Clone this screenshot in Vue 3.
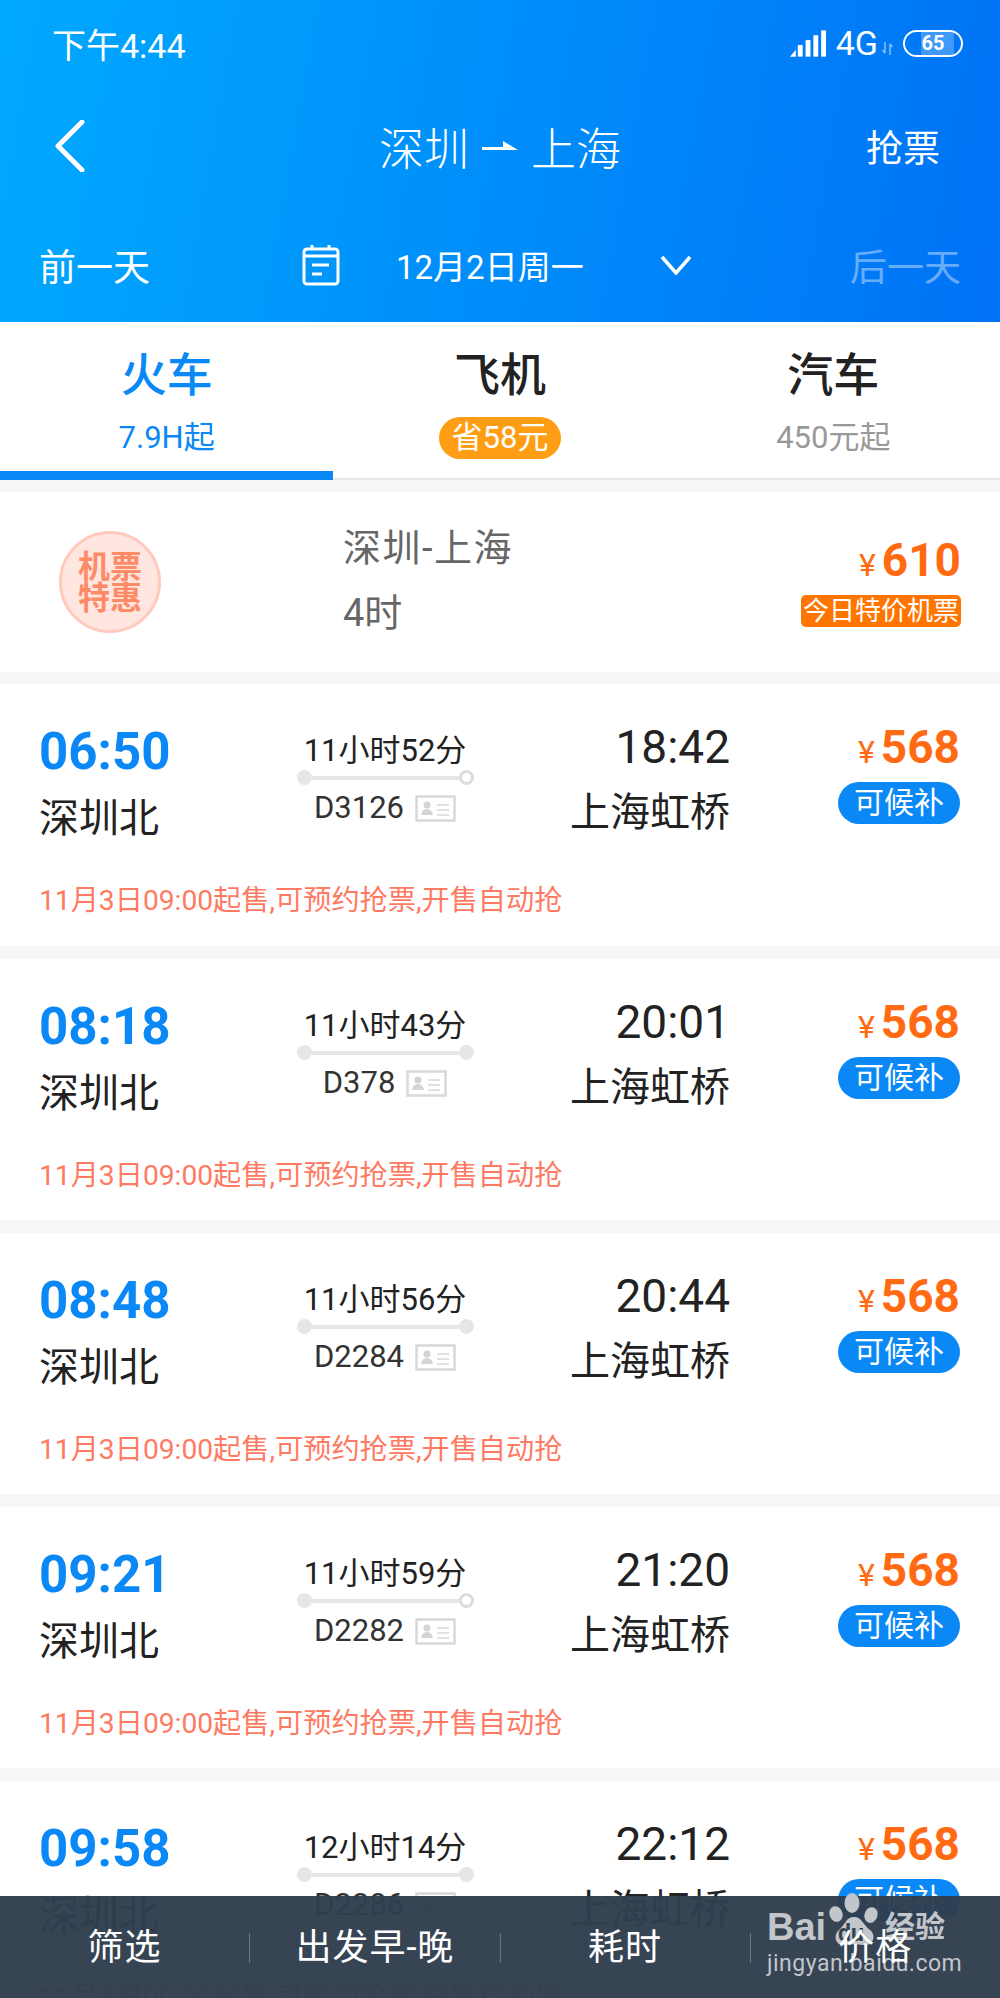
<template>
  <div class="page">
    <header class="head">
      <div class="status">
        <span class="clock">下午4:44</span>
        <div class="status-right">
          <svg class="signal" width="37" height="27" viewBox="0 0 38 27">
            <path d="M0 27 L6 20 V27 Z" fill="#fff" />
            <rect x="8" y="15" width="5" height="12" fill="#fff" />
            <rect x="16" y="10" width="5" height="17" fill="#fff" />
            <rect x="24" y="5" width="5" height="22" fill="#fff" />
            <rect x="32" y="0" width="5" height="27" fill="#fff" />
          </svg>
          <span class="net">4G</span>
          <svg class="updown" width="11" height="13" viewBox="0 0 11 13">
            <path d="M3 0 V11 M0.5 8 L3 11 M8 13 V2 M10.5 5 L8 2" stroke="#fff" stroke-opacity="0.55" stroke-width="1.5" fill="none" />
          </svg>
          <div class="battery">
            <i class="battery-fill"></i>
            <span>65</span>
          </div>
        </div>
      </div>

      <div class="nav">
        <svg class="back" width="32" height="52" viewBox="0 0 32 52">
          <path d="M28 2 L4 26 L28 50" fill="none" stroke="#fff" stroke-width="5" stroke-linecap="round" stroke-linejoin="round" />
        </svg>
        <div class="title">
          <span>深圳</span>
          <svg width="36" height="12" viewBox="0 0 36 12">
            <path d="M0 7 H21 V1 L36 10 H0 Z" fill="#fff" />
          </svg>
          <span>上海</span>
        </div>
        <span class="grab">抢票</span>
      </div>

      <div class="dates">
        <span class="day-link">前一天</span>
        <svg class="cal" width="38" height="42" viewBox="0 0 38 42">
          <rect x="2" y="5" width="34" height="35" rx="3" fill="none" stroke="#fff" stroke-width="3" />
          <path d="M2 12 H36 M10 1 V6 M27 1 V6 M10 21 H27 M10 30 H20" stroke="#fff" stroke-width="3" fill="none" />
        </svg>
        <span class="date">12月2日周一</span>
        <svg class="chev" width="32" height="20" viewBox="0 0 32 20">
          <path d="M2 2 L16 18 L30 2" fill="none" stroke="#fff" stroke-width="3.5" />
        </svg>
        <span class="day-link faded">后一天</span>
      </div>
    </header>

    <nav class="tabs">
      <div v-for="t in tabs" :key="t.name" class="tab" :class="{ active: t.active }">
        <div class="tab-name">{{ t.name }}</div>
        <div class="tab-sub" :class="{ saving: t.saving }">{{ t.sub }}</div>
      </div>
    </nav>

    <section class="plane">
      <div class="stamp">机票<br>特惠</div>
      <div class="plane-info">
        <div class="plane-route">深圳-上海</div>
        <div>4时</div>
      </div>
      <div class="plane-price">
        <div class="price"><em>¥</em>610</div>
        <div class="deal">今日特价机票</div>
      </div>
    </section>

    <section v-for="r in rows" :key="r.no" class="card">
      <div class="row">
        <div class="depart">
          <div class="dep-time">{{ r.dep }}</div>
          <div class="dep-st">深圳北</div>
        </div>
        <div class="mid">
          <div class="dur">{{ r.dur }}</div>
          <div class="route">
            <i class="dot"></i>
            <i class="bar"></i>
            <i class="dot" :class="{ hollow: r.hollow }"></i>
          </div>
          <div class="train">
            <span>{{ r.no }}</span>
            <svg width="41" height="27" viewBox="0 0 41 27">
              <rect x="1.5" y="1.5" width="38" height="24" fill="#fff" stroke="#d8d8d8" stroke-width="2.5" />
              <circle cx="12" cy="10" r="3.5" fill="#d4d4d4" />
              <path d="M6 20 Q7 14 12 14 Q17 14 18 20 Z" fill="#d4d4d4" />
              <path d="M22 10 H34 M22 15 H34 M22 20 H34" stroke="#d8d8d8" stroke-width="1.6" />
            </svg>
          </div>
        </div>
        <div class="arrive">
          <div class="arr-time">{{ r.arr }}</div>
          <div class="arr-st">上海虹桥</div>
        </div>
        <div class="fare">
          <div class="price"><em>¥</em>568</div>
          <div class="wait">可候补</div>
        </div>
      </div>
      <div class="notice">11月3日09:00起售,可预约抢票,开售自动抢</div>
    </section>

    <footer class="sortbar">
      <div class="mark">
        <svg class="paw" width="58" height="58" viewBox="0 0 58 58">
          <ellipse cx="25" cy="11" rx="7.5" ry="10" fill="#c2c6cb" />
          <ellipse cx="9" cy="22" rx="6.5" ry="8" fill="#c2c6cb" transform="rotate(-20 9 22)" />
          <ellipse cx="44" cy="23" rx="6.5" ry="8" fill="#c2c6cb" transform="rotate(20 44 23)" />
          <path d="M27 25 C19 25 18 33 12 38 C6 43 8 54 18 53 C24 52 30 52 36 53 C46 54 50 44 43 38 C36 33 35 25 27 25 Z" fill="#c2c6cb" />
        </svg>
        <span class="du">du</span>
        <div class="mark-top">
          <span class="bai">Bai</span>
          <span class="jy">经验</span>
        </div>
        <div class="mark-url">jingyan.baidu.com</div>
      </div>
      <div v-for="s in sorts" :key="s" class="sort">{{ s }}</div>
    </footer>
  </div>
</template>

<script setup>
const tabs = [
  { name: '火车', sub: '7.9H起', active: true },
  { name: '飞机', sub: '省58元', saving: true },
  { name: '汽车', sub: '450元起' },
]

const rows = [
  { dep: '06:50', arr: '18:42', dur: '11小时52分', no: 'D3126', hollow: true },
  { dep: '08:18', arr: '20:01', dur: '11小时43分', no: 'D378' },
  { dep: '08:48', arr: '20:44', dur: '11小时56分', no: 'D2284' },
  { dep: '09:21', arr: '21:20', dur: '11小时59分', no: 'D2282', hollow: true },
  { dep: '09:58', arr: '22:12', dur: '12小时14分', no: 'D2286' },
]

const sorts = ['筛选', '出发早-晚', '耗时', '价格']
</script>

<style>
html, body {
  margin: 0;
  background: #f6f6f6;
}
</style>

<style scoped>
.page {
  position: relative;
  width: 1000px;
  height: 1998px;
  overflow: hidden;
  background: #f6f6f6;
  color: #222;
  font-family: Roboto, "Noto Sans CJK SC", sans-serif;
}

.head {
  height: 322px;
  box-sizing: border-box;
  background: linear-gradient(100deg, #00a9fe 0%, #0072f6 100%);
  color: #fff;
}

.status {
  display: flex;
  justify-content: space-between;
  align-items: center;
  height: 86px;
  padding: 0 37px 0 52px;
}

.clock {
  font-size: 34px;
}

.status-right {
  display: flex;
  align-items: center;
}

.net {
  font-size: 34px;
  margin-left: 9px;
  line-height: 1;
}

.updown {
  margin: 10px 10px 0 4px;
}

.battery {
  position: relative;
  width: 56px;
  height: 23px;
  border: 2.5px solid #fff;
  border-radius: 14px;
  overflow: hidden;
  text-align: center;
  font-size: 20px;
  font-weight: 700;
  line-height: 23px;
}

.battery span {
  position: relative;
}

.battery-fill {
  position: absolute;
  left: 28%;
  top: 0;
  bottom: 0;
  width: 60%;
  background: rgba(255, 255, 255, 0.25);
}

.nav {
  display: grid;
  grid-template-columns: 1fr auto 1fr;
  align-items: center;
  height: 120px;
  padding: 0 60px 0 54px;
}

.title {
  display: flex;
  align-items: center;
  gap: 13px;
  font-size: 45px;
  font-weight: 300;
  margin-left: 6px;
}

.grab {
  justify-self: end;
  font-size: 37px;
}

.dates {
  display: flex;
  align-items: center;
  height: 72px;
  margin-top: 23px;
  padding: 0 39px;
}

.day-link {
  font-size: 37px;
}

.faded {
  opacity: 0.4;
  margin-left: auto;
}

.cal {
  margin-left: 152px;
}

.date {
  font-size: 33px;
  margin-left: 56px;
}

.chev {
  margin-left: 76px;
}

.tabs {
  display: flex;
  height: 158px;
  box-sizing: border-box;
  background: #fff;
  border-bottom: 2px solid #e8e8e8;
}

.tab {
  flex: 1;
  display: flex;
  flex-direction: column;
  align-items: center;
  height: 158px;
  box-sizing: border-box;
  padding-top: 22px;
}

.tab.active {
  border-bottom: 9px solid #0a88f5;
  color: #0a88f5;
}

.tab-name {
  font-size: 46px;
  font-weight: 500;
  line-height: 62px;
}

.tab-sub {
  margin-top: 11px;
  font-size: 31px;
  line-height: 42px;
  color: #999;
}

.active .tab-sub {
  color: #0a88f5;
}

.tab-sub.saving {
  padding: 0 13px;
  border-radius: 21px;
  background: #ff9d14;
  color: #fff;
}

.plane {
  display: flex;
  align-items: center;
  height: 180px;
  margin-top: 12px;
  padding: 0 39px 0 59px;
  background: #fff;
}

.stamp {
  width: 102px;
  height: 102px;
  box-sizing: border-box;
  border: 3px solid #ffcabc;
  border-radius: 50%;
  background: #ffe6e0;
  color: #ff8a66;
  font-size: 32px;
  font-weight: 700;
  line-height: 31px;
  text-align: center;
  padding-top: 18px;
}

.plane-info {
  margin-left: 182px;
  color: #666;
  font-size: 38px;
  line-height: 65px;
  margin-top: -2px;
}

.plane-route {
  letter-spacing: 1.5px;
}

.plane-price {
  margin-left: auto;
  display: flex;
  flex-direction: column;
  align-items: flex-end;
}

.price {
  color: #ff6a13;
  font-size: 46px;
  font-weight: 700;
  line-height: 44px;
  text-align: right;
}

.price em {
  font-style: normal;
  font-weight: 400;
  font-size: 32px;
  line-height: 1;
  margin-right: 6px;
}

.deal {
  margin-top: 13px;
  padding: 0 2px;
  height: 32px;
  border-radius: 5px;
  background: #ff7500;
  color: #fff;
  font-size: 26px;
  line-height: 32px;
}

.card {
  margin-top: 12px;
  height: 262px;
  box-sizing: border-box;
  padding: 40px 40px 0 39px;
  background: #fff;
}

.card + .card {
  margin-top: 13px;
  height: 261px;
}

.row {
  display: grid;
  grid-template-columns: 241px 210px 240px 230px;
  height: 157px;
}

.depart {
  padding-top: 1px;
}

.dep-time {
  color: #0a88f5;
  font-size: 51px;
  font-weight: 700;
  line-height: 54px;
}

.dep-st {
  margin-top: 16px;
  font-size: 40px;
  line-height: 48px;
}

.mid {
  display: flex;
  flex-direction: column;
  align-items: center;
  padding-top: 7px;
}

.dur {
  font-size: 31px;
  line-height: 39px;
}

.route {
  display: flex;
  align-items: center;
  width: 177px;
  height: 15px;
}

.dot {
  width: 15px;
  height: 15px;
  box-sizing: border-box;
  border-radius: 50%;
  background: #e6e6e6;
}

.dot.hollow {
  background: #fff;
  border: 3px solid #dcdcdc;
}

.bar {
  flex: 1;
  height: 4px;
  background: #e6e6e6;
}

.train {
  display: flex;
  align-items: center;
  gap: 11px;
  margin-top: 3px;
  font-size: 31px;
  line-height: 40px;
  color: #333;
}

.arrive {
  text-align: right;
  padding-top: 1px;
}

.arr-time {
  font-size: 46px;
  line-height: 44px;
}

.arr-st {
  margin-top: 20px;
  font-size: 40px;
  line-height: 48px;
}

.fare {
  display: flex;
  flex-direction: column;
  align-items: flex-end;
  padding-top: 1px;
}

.wait {
  margin-top: 13px;
  width: 122px;
  height: 42px;
  border-radius: 21px;
  background: #0a88f5;
  color: #fff;
  font-size: 30px;
  line-height: 41px;
  text-align: center;
}

.notice {
  color: #ff7a63;
  font-size: 28.2px;
  line-height: 40px;
}

.sortbar {
  position: absolute;
  left: 0;
  right: 0;
  bottom: 0;
  display: flex;
  align-items: center;
  height: 102px;
  box-sizing: border-box;
  padding-top: 2px;
  background: rgba(47, 62, 78, 0.97);
  color: #fff;
  font-size: 36px;
}

.sort {
  position: relative;
  flex: 1;
  height: 30px;
  line-height: 30px;
  text-align: center;
  letter-spacing: 1px;
  border-right: 1px solid rgba(255, 255, 255, 0.25);
}

.sort:last-child {
  border-right: 0;
}

.mark {
  position: absolute;
  left: 767px;
  top: -4px;
  width: 180px;
  height: 90px;
  color: #c2c6cb;
  pointer-events: none;
}

.paw {
  position: absolute;
  left: 60px;
  top: 0;
}

.du {
  position: absolute;
  left: 71px;
  top: 30px;
  color: #34414f;
  font-size: 23px;
  font-weight: 700;
  line-height: 24px;
}

.mark-top {
  position: absolute;
  left: 0;
  top: 15px;
  width: 178px;
  display: flex;
  justify-content: space-between;
  align-items: center;
}

.bai {
  font-size: 38px;
  font-weight: 700;
  line-height: 40px;
  font-family: "Liberation Sans", sans-serif;
}

.jy {
  font-size: 30px;
  font-weight: 700;
  line-height: 40px;
}

.mark-url {
  position: absolute;
  left: 0;
  top: 59px;
  font-size: 23px;
  line-height: 26px;
  letter-spacing: 0.5px;
}
</style>
